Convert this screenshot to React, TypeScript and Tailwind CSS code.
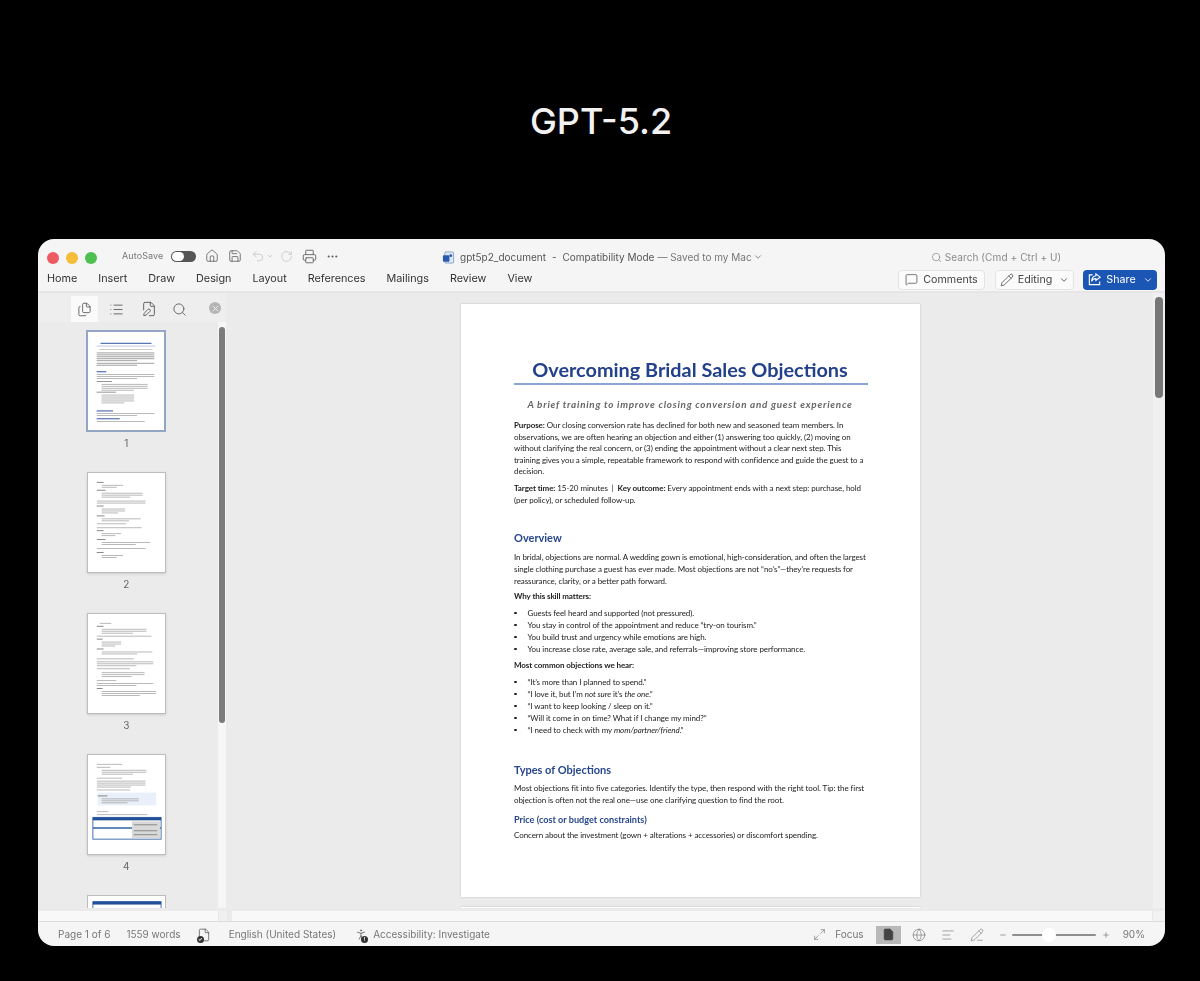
import { AlignLeft, ChevronDown, Ellipsis, File, FilePen, FileText, Files, Globe, Home, List, Maximize2, MessageSquare, Minus, PencilLine, Pencil, PersonStanding, Plus, Printer, RotateCw, Save, Search, Undo2, X } from 'lucide-react';

const FONT = "font-['Inter','Liberation_Sans',sans-serif]";
const DOC = "font-['Lato','Open_Sans',sans-serif]";

const tabs = ['Home', 'Insert', 'Draw', 'Design', 'Layout', 'References', 'Mailings', 'Review', 'View'];

type Row = [number, number, number, string?];

const seq = (start: number, step: number, n: number, x: number, w: number, c?: string): Row[] =>
  Array.from({ length: n }, (_, i) => [start + i * step, x, w - (i === n - 1 ? w * 0.3 : 0), c] as Row);

const BLUE = '#3f62a8';

const thumb1: Row[] = [
  [11, 13, 53, BLUE], [14, 9, 61, '#9fb6db'], [17.5, 12, 55, '#b5b5b5'],
  ...seq(21, 2, 5, 9, 60, '#777'), ...seq(31.5, 2, 2, 9, 60, '#777'),
  [40, 9, 10, BLUE], ...seq(43, 2, 3, 9, 60), [50, 9, 16, '#666'],
  ...seq(53, 2, 4, 14, 48), [61, 9, 20, '#666'], ...seq(64, 2, 5, 14, 34),
  [80, 9, 17, BLUE], ...seq(83, 2, 2, 9, 60), [88, 9, 24, BLUE], [91, 9, 50],
];
const thumb2: Row[] = [
  [9, 9, 7, '#555'], ...seq(12, 2, 2, 14, 22), [17, 9, 9, '#555'], ...seq(20, 2, 3, 14, 42),
  [28, 9, 50], [30, 9, 50], [33, 9, 7, '#555'], ...seq(36, 2, 3, 14, 24), [43, 9, 8, '#555'],
  ...seq(46, 2, 2, 14, 40), [51, 9, 30], [55, 9, 46], [58, 9, 7, '#555'], ...seq(61, 2, 2, 14, 20),
  [67, 9, 9, '#555'], ...seq(70, 2, 2, 14, 50), [76, 9, 50], [80, 9, 7, '#555'], ...seq(83, 2, 2, 14, 22),
];
const thumb3: Row[] = [
  [9, 12, 12], [12, 9, 7, '#555'], ...seq(15, 2, 3, 14, 46), [22, 9, 56], [25, 9, 6, '#555'],
  ...seq(28, 2, 3, 14, 20), [35, 9, 7, '#555'], ...seq(38, 2, 2, 14, 52), [45, 9, 38],
  ...seq(48, 2, 3, 9, 58), [55, 9, 34], ...seq(59, 2, 3, 14, 44), [67, 9, 20], ...seq(70, 2, 2, 9, 58),
  [75, 9, 6, '#555'], ...seq(78, 2, 3, 14, 56),
];
const thumb4: Row[] = [
  [9, 9, 26], [12, 9, 14], ...seq(15, 2, 3, 14, 46), [23, 9, 26], ...seq(26, 2, 4, 9, 50),
  [35, 9, 34], [41, 10, 10, '#555'], ...seq(44, 2, 3, 14, 38), [57, 9, 12], [60, 9, 52],
];

const ThumbRows = ({ rows }: { rows: Row[] }) => (
  <>
    {rows.map(([y, x, w, c], i) => (
      <rect key={i} x={x} y={y} width={w} height={c === BLUE ? 1.1 : 0.7} fill={c ?? '#9a9a9a'} />
    ))}
  </>
);

const Thumb = ({ rows, label, active, table }: { rows: Row[]; label: number; active?: boolean; table?: boolean }) => (
  <div className="flex flex-col items-center">
    <div className={active ? 'h-[102px] w-[80px] border-2 border-[#93a6c6] bg-white' : 'h-[101px] w-[79px] border border-[#bdbdbd] bg-white shadow-sm'}>
      <svg viewBox="0 0 79 100" className="h-full w-full" preserveAspectRatio="none">
        {table && <rect x="10" y="38" width="60" height="13" fill="#eaf0f9" />}
        <ThumbRows rows={rows} />
        {table && (
          <g>
            <rect x="5" y="63" width="70" height="22" fill="#fff" stroke="#2f62a8" strokeWidth="0.9" />
            <rect x="5" y="63" width="70" height="3" fill="#1f4f96" />
            <rect x="5" y="73" width="70" height="1.5" fill="#2f62a8" />
            <rect x="45" y="67" width="29" height="17" fill="#d9d9d9" />
            <rect x="47" y="70" width="24" height="1" fill="#888" />
            <rect x="47" y="76" width="24" height="1" fill="#888" />
            <rect x="47" y="80" width="24" height="1" fill="#888" />
          </g>
        )}
      </svg>
    </div>
    <span className="mt-[3px] h-[17px] text-[10px] leading-[17px] text-[#666]">{label}</span>
  </div>
);

const TEXT = 'whitespace-nowrap text-[8px] tracking-[-0.08px] text-[#222]';

const Line = ({ children, mt = '', tight }: { children: React.ReactNode; mt?: string; tight?: boolean }) => (
  <div className={`${tight ? 'h-[11.6px] leading-[11.6px]' : 'h-[12px] leading-[12px]'} ${TEXT} ${mt}`}>{children}</div>
);

const Bullet = ({ children }: { children: React.ReactNode }) => (
  <div className={`flex h-[12px] items-center leading-[12px] ${TEXT}`}>
    <span className="h-[2.5px] w-[2.5px] rounded-full bg-[#222]" />
    <span className="ml-[11px]">{children}</span>
  </div>
);

const Heading = ({ children, mt }: { children: React.ReactNode; mt: string }) => (
  <div className={`h-[14px] text-[11px] font-bold leading-[14px] text-[#27478d] ${mt}`}>{children}</div>
);

const DocPage = () => (
  <div className={`h-[593px] w-[459px] shrink-0 bg-white pl-[53px] pr-[50px] pt-[53px] shadow-[0_0_2px_#bdbdbd] ${DOC}`}>
    <div className="h-[24px] w-[354px] whitespace-nowrap pr-[2px] text-center text-[19.85px] font-bold leading-[24px] text-[#23408a]">Overcoming Bridal Sales Objections</div>
    <div className="mt-[2px] h-[2px] w-[354px] bg-[#8ba5d3]" />
    <div className="mt-[12px] h-[14px] w-[354px] whitespace-nowrap pr-[2px] text-center text-[9.9px] font-bold italic leading-[14px] tracking-[0.73px] text-[#666]">A brief training to improve closing conversion and guest experience</div>
    <div className="mt-[9px]">
      <Line tight><b>Purpose:</b> Our closing conversion rate has declined for both new and seasoned team members. In</Line>
      <Line tight>observations, we are often hearing an objection and either (1) answering too quickly, (2) moving on</Line>
      <Line tight>without clarifying the real concern, or (3) ending the appointment without a clear next step. This</Line>
      <Line tight>training gives you a simple, repeatable framework to respond with confidence and guide the guest to a</Line>
      <Line tight>decision.</Line>
    </div>
    <Line mt="mt-[4px]"><b>Target time:</b> 15-20 minutes &nbsp;|&nbsp; <b>Key outcome:</b> Every appointment ends with a next step: purchase, hold</Line>
    <Line>(per policy), or scheduled follow-up.</Line>
    <Heading mt="mt-[25px]">Overview</Heading>
    <Line mt="mt-[6px]">In bridal, objections are normal. A wedding gown is emotional, high-consideration, and often the largest</Line>
    <Line>single clothing purchase a guest has ever made. Most objections are not “no’s”—they’re requests for</Line>
    <Line>reassurance, clarity, or a better path forward.</Line>
    <Line mt="mt-[3px]"><b>Why this skill matters:</b></Line>
    <div className="mt-[5px]">
      <Bullet>Guests feel heard and supported (not pressured).</Bullet>
      <Bullet>You stay in control of the appointment and reduce “try-on tourism.”</Bullet>
      <Bullet>You build trust and urgency while emotions are high.</Bullet>
      <Bullet>You increase close rate, average sale, and referrals—improving store performance.</Bullet>
    </div>
    <Line mt="mt-[4px]"><b>Most common objections we hear:</b></Line>
    <div className="mt-[5px]">
      <Bullet>“It’s more than I planned to spend.”</Bullet>
      <Bullet>“I love it, but I’m <i>not sure</i> it’s <i>the one</i>.”</Bullet>
      <Bullet>“I want to keep looking / sleep on it.”</Bullet>
      <Bullet>“Will it come in on time? What if I change my mind?”</Bullet>
      <Bullet>“I need to check with my <i>mom/partner/friend</i>.”</Bullet>
    </div>
    <Heading mt="mt-[27px]">Types of Objections</Heading>
    <Line mt="mt-[5px]">Most objections fit into five categories. Identify the type, then respond with the right tool. Tip: the first</Line>
    <Line>objection is often not the real one—use one clarifying question to find the root.</Line>
    <div className="mt-[7px] h-[13px] text-[9.15px] font-bold leading-[13px] text-[#27478d]">Price (cost or budget constraints)</div>
    <Line mt="mt-[3px]">Concern about the investment (gown + alterations + accessories) or discomfort spending.</Line>
  </div>
);

const WordIcon = () => (
  <svg viewBox="0 0 14 14" className="h-[13px] w-[13px]">
    <rect x="3" y="1" width="9.5" height="12" rx="1.2" fill="#dfe8f5" stroke="#6f8fc4" strokeWidth="0.8" />
    <rect x="1" y="4.5" width="7" height="7" rx="1" fill="#2a5ab0" />
    <circle cx="9.5" cy="5" r="1.5" fill="#2a5ab0" />
  </svg>
);

const SpellIcon = () => (
  <span className="relative flex h-[16px] w-[14px] items-center justify-center">
    <File size={14} strokeWidth={1.3} className="text-[#555]" />
    <span className="absolute bottom-0 left-0 flex h-[7px] w-[7px] items-center justify-center rounded-full bg-[#333] text-[5px] font-bold leading-none text-white">✓</span>
  </span>
);

const AccessIcon = () => (
  <span className="relative flex h-[16px] w-[14px] items-center justify-center">
    <PersonStanding size={15} strokeWidth={1.3} className="text-[#555]" />
    <span className="absolute bottom-0 right-0 flex h-[7px] w-[7px] items-center justify-center rounded-full bg-[#333] text-[5px] font-bold leading-none text-white">!</span>
  </span>
);

export default function App() {
  return (
    <div className={`h-[981px] w-[1200px] overflow-hidden bg-black ${FONT}`}>
      <div className="flex h-[239px] items-center justify-center pl-[2px] pt-[2px]">
        <h1 className="text-[36px] font-medium leading-none text-[#f2f2f2]">GPT-5.2</h1>
      </div>

      <div className="ml-[38px] flex h-[707px] w-[1127px] flex-col overflow-hidden rounded-[16px] bg-[#f5f5f5] blur-[0.45px]">
        {/* title bar */}
        <div className="flex h-[29px] shrink-0 items-end pb-[4px] text-[#5f5f5f]">
          <div className="ml-[9px] flex items-center gap-[7px]">
            <span className="h-[12px] w-[12px] rounded-full bg-[#ee5a62]" />
            <span className="h-[12px] w-[12px] rounded-full bg-[#f6bd3b]" />
            <span className="h-[12px] w-[12px] rounded-full bg-[#4fc04f]" />
          </div>
          <div className="ml-[25px] flex h-[16px] items-center">
            <span className="w-[49px] text-[9px] tracking-[0.1px] text-[#777]">AutoSave</span>
            <span className="flex h-[11px] w-[25px] items-center rounded-full bg-[#555] pl-[1px]">
              <span className="h-[9px] w-[12px] rounded-full bg-white" />
            </span>
            <Home size={14} strokeWidth={1.4} className="ml-[9px]" />
            <Save size={14} strokeWidth={1.4} className="ml-[9px]" />
            <Undo2 size={14} strokeWidth={1.4} className="ml-[9px] text-[#c4c4c4]" />
            <ChevronDown size={8} className="ml-[1px] text-[#bdbdbd]" />
            <RotateCw size={13} strokeWidth={1.4} className="ml-[6px] text-[#c4c4c4]" />
            <Printer size={15} strokeWidth={1.4} className="ml-[9px]" />
            <Ellipsis size={13} className="ml-[9px]" />
          </div>
          <div className="-mb-[1px] ml-[103px] flex h-[16px] items-center text-[10px] text-[#555]">
            <WordIcon />
            <span className="ml-[5px]">gpt5p2_document</span>
            <span className="ml-[6px]">-</span>
            <span className="ml-[6px]">Compatibility Mode</span>
            <span className="ml-[3px] text-[#777]">— Saved to my Mac</span>
            <ChevronDown size={10} className="ml-[1px] text-[#777]" />
          </div>
          <div className="-mb-[1px] ml-[168px] flex h-[16px] items-center text-[10px] tracking-[0.1px] text-[#8a8a8a]">
            <Search size={11} strokeWidth={1.6} />
            <span className="ml-[3px]">Search (Cmd + Ctrl + U)</span>
          </div>
        </div>

        {/* ribbon tabs */}
        <div className="flex h-[25px] shrink-0 items-center border-b-2 border-[#e6e6e6] pl-[9px] pr-[8px]">
          <div className="flex gap-[21px] text-[10.8px] text-[#333]">
            {tabs.map((t) => (
              <span key={t}>{t}</span>
            ))}
          </div>
          <div className="ml-auto flex items-center text-[10.7px] text-[#444]">
            <span className="flex h-[20px] w-[87px] items-center justify-center gap-[5px] rounded-[4px] border border-[#e4e4e4] bg-[#fbfbfb]">
              <MessageSquare size={13} strokeWidth={1.3} />
              <span className="mt-[1px]">Comments</span>
            </span>
            <span className="ml-[10px] flex h-[20px] w-[79px] items-center justify-center gap-[4px] rounded-[4px] border border-[#e4e4e4] bg-[#fbfbfb]">
              <Pencil size={14} strokeWidth={1.3} />
              <span className="mt-[1px]">Editing</span>
              <ChevronDown size={10} className="ml-[3px]" />
            </span>
            <span className="ml-[9px] flex h-[20px] w-[74px] items-center justify-center gap-[4px] rounded-[4px] bg-[#1c56b5] text-white">
              <svg viewBox="0 0 16 16" className="h-[15px] w-[15px]" fill="none" stroke="currentColor" strokeWidth="1.2">
                <path d="M6 3H2.5v10.5h11V10" />
                <path d="M9.5 2l4.5 3.5L9.5 9V7C7 7 5.5 8 5 10c0-3 1.5-5.5 4.5-6z" />
              </svg>
              <span className="mt-[1px]">Share</span>
              <ChevronDown size={10} className="ml-[3px]" />
            </span>
          </div>
        </div>

        {/* body */}
        <div className="flex min-h-0 flex-1 bg-[#ebebeb]">
          <div className="flex w-[188px] shrink-0 flex-col">
            <div className="flex h-[29px] shrink-0 items-end bg-[#eeeeee] pl-[33px] text-[#5a5a5a]">
              <span className="flex h-[26px] w-[27px] items-center justify-center bg-[#fafafa]">
                <Files size={15} strokeWidth={1.4} />
              </span>
              <span className="flex h-[26px] w-[37px] items-center justify-center">
                <List size={15} strokeWidth={1.4} />
              </span>
              <span className="flex h-[26px] w-[28px] items-center justify-center">
                <FilePen size={16} strokeWidth={1.4} />
              </span>
              <span className="flex h-[26px] w-[33px] items-center justify-center">
                <Search size={15} strokeWidth={1.4} />
              </span>
              <span className="mb-[8px] ml-[13px] flex h-[12px] w-[12px] items-center justify-center rounded-full bg-[#b5b5b5] text-[#eee]">
                <X size={9} strokeWidth={2.5} />
              </span>
            </div>
            <div className="flex min-h-0 flex-1">
              <div className="flex min-w-0 flex-1 flex-col gap-[20px] overflow-hidden pl-[48.5px] pr-[52px] pt-[8px]">
                <Thumb rows={thumb1} label={1} active />
                <Thumb rows={thumb2} label={2} />
                <Thumb rows={thumb3} label={3} />
                <Thumb rows={thumb4} label={4} table />
                <div className="shrink-0">
                  <div className="h-[101px] w-[79px] border border-[#bdbdbd] bg-white">
                    <svg viewBox="0 0 79 100" className="h-full w-full">
                      <rect x="5" y="5" width="70" height="22" fill="#fff" stroke="#2f62a8" strokeWidth="0.9" />
                      <rect x="5" y="5" width="70" height="3" fill="#1f4f96" />
                    </svg>
                  </div>
                </div>
              </div>
              <div className="w-[8px] shrink-0 bg-[#f6f6f6] px-[1px] pt-[5px]">
                <div className="h-[396px] w-[6px] rounded-full bg-[#7b7b7b]" />
              </div>
            </div>
          </div>

          <div className="flex min-w-0 flex-1 flex-col overflow-hidden pl-[235px] pt-[11px]">
            <DocPage />
            <div className="mt-[10px] h-[10px] w-[459px] shrink-0 bg-white shadow-[0_0_2px_#bdbdbd]" />
          </div>
          <div className="w-[12px] shrink-0 bg-[#f0f0f0] pl-[2px] pt-[4px]">
            <div className="h-[101px] w-[8px] rounded-full bg-[#777]" />
          </div>
        </div>

        {/* horizontal scroll lane */}
        <div className="h-[14px] shrink-0 border-b border-[#dcdcdc] bg-[#ebebeb] pt-[3px]">
          <div className="flex h-full bg-[#f8f8f8]">
            <div className="h-full w-[180px]" />
            <div className="h-full w-[10px] border-x border-[#e8e8e8] bg-[#f0f0f0]" />
            <div className="h-full w-[4px] bg-[#ebebeb]" />
            <div className="ml-auto h-full w-[13px] border-l border-[#e8e8e8] bg-[#f2f2f2]" />
          </div>
        </div>

        {/* status bar */}
        <div className="flex h-[24px] shrink-0 items-center pl-[20px] pr-[20px] pt-[1px] text-[10px] text-[#777]">
          <span>Page 1 of 6</span>
          <span className="ml-[16px]">1559 words</span>
          <span className="ml-[16px]"><SpellIcon /></span>
          <span className="ml-[18px]">English (United States)</span>
          <span className="ml-[18px]"><AccessIcon /></span>
          <span className="ml-[5px]">Accessibility: Investigate</span>
          <div className="ml-auto flex items-center">
            <Maximize2 size={13} strokeWidth={1.2} />
            <span className="ml-[9px]">Focus</span>
            <span className="ml-[12px] flex h-[18px] w-[25px] items-center justify-center bg-[#b8b8b8]">
              <FileText size={13} fill="#444" strokeWidth={1.2} className="text-[#444]" />
            </span>
            <Globe size={14} strokeWidth={1.1} className="ml-[11px]" />
            <AlignLeft size={14} strokeWidth={1.1} className="ml-[15px]" />
            <PencilLine size={14} strokeWidth={1.1} className="ml-[15px]" />
            <Minus size={8} strokeWidth={2} className="ml-[15px]" />
            <div className="relative ml-[5px] flex h-[14px] w-[84px] items-center">
              <div className="h-[2px] w-full rounded-full bg-[#8e8e8e]" />
              <span className="absolute left-[30px] h-[14px] w-[14px] rounded-full bg-white" />
            </div>
            <Plus size={8} strokeWidth={2} className="ml-[6px]" />
            <span className="ml-[13px]">90%</span>
          </div>
        </div>
      </div>
    </div>
  );
}
